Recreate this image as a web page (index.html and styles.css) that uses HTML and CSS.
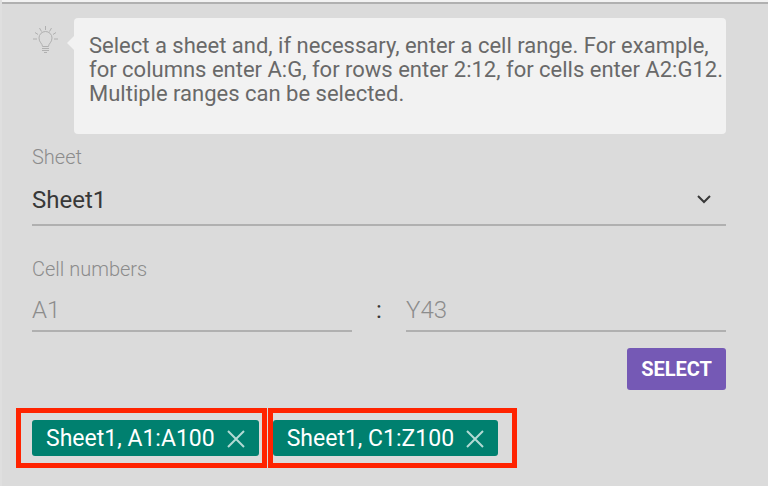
FILE: index.html
```
<!DOCTYPE html>
<html lang="en">
  <head>
    <meta charset="UTF-8" />
    <meta name="viewport" content="width=device-width, initial-scale=1.0" />
    <title>Select cell range</title>
    <link rel="stylesheet" href="styles.css">
  </head>
  <body>
    <form class="range-form">
      <div class="hint">
        <svg class="hint-icon" viewBox="0 0 28 28" aria-hidden="true">
          <path d="M10.500 20.500c0-3-3.500-4-3.500-8.500a6.500 6.500 0 0 1 13 0c0 4.500-3.500 5.500-3.500 8.500z" />
          <path d="M10 22.500h7M10 24.500h7M12 26.500h3" />
          <path d="M13.500 0v4M7.500 2l2 3.500M19.500 2l-2 3.500M3 6.500l3 2M24 6.500l-3 2M1 13h4M22 13h4" />
        </svg>
        <p class="hint-text">
          Select a sheet and, if necessary, enter a cell range. For example,
          for columns enter A:G, for rows enter 2:12, for cells enter A2:G12.
          Multiple ranges can be selected.
        </p>
      </div>

      <label class="label" for="sheet">Sheet</label>
      <div class="select-box">
        <select class="field sheet" id="sheet">
          <option>Sheet1</option>
        </select>
        <svg class="arrow" viewBox="0 0 16 12" aria-hidden="true">
          <path d="M2 3l6 6 6-6" />
        </svg>
      </div>

      <label class="label label-cells" for="from">Cell numbers</label>
      <div class="cells">
        <input class="field cell" type="text" id="from" placeholder="A1" autocomplete="off" />
        <span class="colon">:</span>
        <input class="field cell" type="text" id="to" placeholder="Y43" aria-label="Last cell" autocomplete="off" />
      </div>

      <div class="actions">
        <button class="select-btn" type="button">SELECT</button>
      </div>

      <!-- Selected ranges -->
      <div class="chips">
        <div class="chip chip-first">
          <span>Sheet1, A1:A100</span>
          <button class="remove" type="button" aria-label="Remove Sheet1, A1:A100">
            <svg viewBox="0 0 18 18"><path d="M1 1l16 16M17 1L1 17" /></svg>
          </button>
        </div>
        <div class="chip chip-second">
          <span>Sheet1, C1:Z100</span>
          <button class="remove" type="button" aria-label="Remove Sheet1, C1:Z100">
            <svg viewBox="0 0 18 18"><path d="M1 1l16 16M17 1L1 17" /></svg>
          </button>
        </div>
      </div>
    </form>
  </body>
</html>
```
FILE: styles.css
```
* {
  box-sizing: border-box;
}
body {
  margin: 0;
  min-height: 100vh;
  border-left: 2px solid #dfdfdf;
  background-color: #dbdbdb;
  color: #383838;
  font-family: Roboto, sans-serif;
  font-size: 24px;
}
/* Bottom edge of the panel above */
body::before {
  content: "";
  display: block;
  height: 2px;
  background-color: #f2f2f2;
  border-bottom: 2px solid #b0b0b0;
}
.range-form {
  padding: 14px 42px 18px 30px;
}
.hint {
  display: flex;
  align-items: flex-start;
  gap: 14px;
}
.hint-icon {
  flex: none;
  width: 28px;
  height: 28px;
  margin-top: 8px;
  fill: none;
  stroke: #b0b0b0;
  stroke-width: 1;
}
.hint-text {
  position: relative;
  flex: 1;
  min-height: 116px;
  margin: 0;
  padding: 16px 0 16px 15px;
  border-radius: 4px;
  background-color: #f2f2f2;
  color: #696969;
  font-size: 22px;
  line-height: 24px;
}
.hint-text::before {
  content: "";
  position: absolute;
  top: 18px;
  left: -7px;
  border: 7px solid transparent;
  border-right-color: #f2f2f2;
  border-left: 0;
}
.label {
  display: block;
  margin-top: 12px;
  color: #8c8c8c;
  font-size: 20px;
  font-weight: 300;
  line-height: 22px;
}
.label-cells {
  margin-top: 32px;
}
.field {
  display: block;
  width: 100%;
  padding: 0;
  border: 0;
  border-bottom: 2px solid #b0b0b0;
  border-radius: 0;
  background: none;
  color: #383838;
  font-family: inherit;
  font-size: 24px;
  outline: none;
}
.select-box {
  position: relative;
}
.sheet {
  height: 58px;
  padding-top: 8px;
  appearance: none;
}
.arrow {
  position: absolute;
  top: 25px;
  right: 14px;
  width: 16px;
  height: 12px;
  fill: none;
  stroke: #383838;
  stroke-width: 2;
  pointer-events: none;
}
.cells {
  display: flex;
}
.cell {
  flex: 1;
  min-width: 0;
  height: 52px;
  padding-top: 10px;
}
.cell::placeholder {
  color: #8c8c8c;
  font-weight: 300;
  opacity: 1;
}
.colon {
  width: 54px;
  padding-top: 16px;
  line-height: 28px;
  text-align: center;
}
.actions {
  display: flex;
  justify-content: flex-end;
  margin-top: 16px;
}
.select-btn {
  height: 42px;
  padding: 0 14px;
  border: 0;
  border-radius: 3px;
  background-color: #7559b5;
  color: #fff;
  font-family: inherit;
  font-size: 20px;
  font-weight: 700;
  cursor: pointer;
}
.chips {
  display: flex;
  gap: 14px;
  margin-top: 30px;
}
.chip {
  position: relative;
  display: flex;
  align-items: center;
  gap: 12px;
  height: 36px;
  padding: 0 14px;
  border-radius: 3px;
  background-color: #00806f;
  color: #fff;
  font-size: 23px;
  white-space: nowrap;
}
.remove {
  display: flex;
  padding: 0;
  border: 0;
  background: none;
  cursor: pointer;
}
.remove svg {
  width: 18px;
  height: 18px;
  margin-top: 2px;
  fill: none;
  stroke: #b3dad4;
  stroke-width: 2;
}
/* Red frames around the selected ranges */
.chip::after {
  content: "";
  position: absolute;
  top: -12px;
  bottom: -12px;
  border: 5px solid #ff2300;
  pointer-events: none;
}
.chip-first::after {
  left: -16px;
  right: -8px;
}
.chip-second::after {
  left: -5px;
  right: -19px;
}
```
